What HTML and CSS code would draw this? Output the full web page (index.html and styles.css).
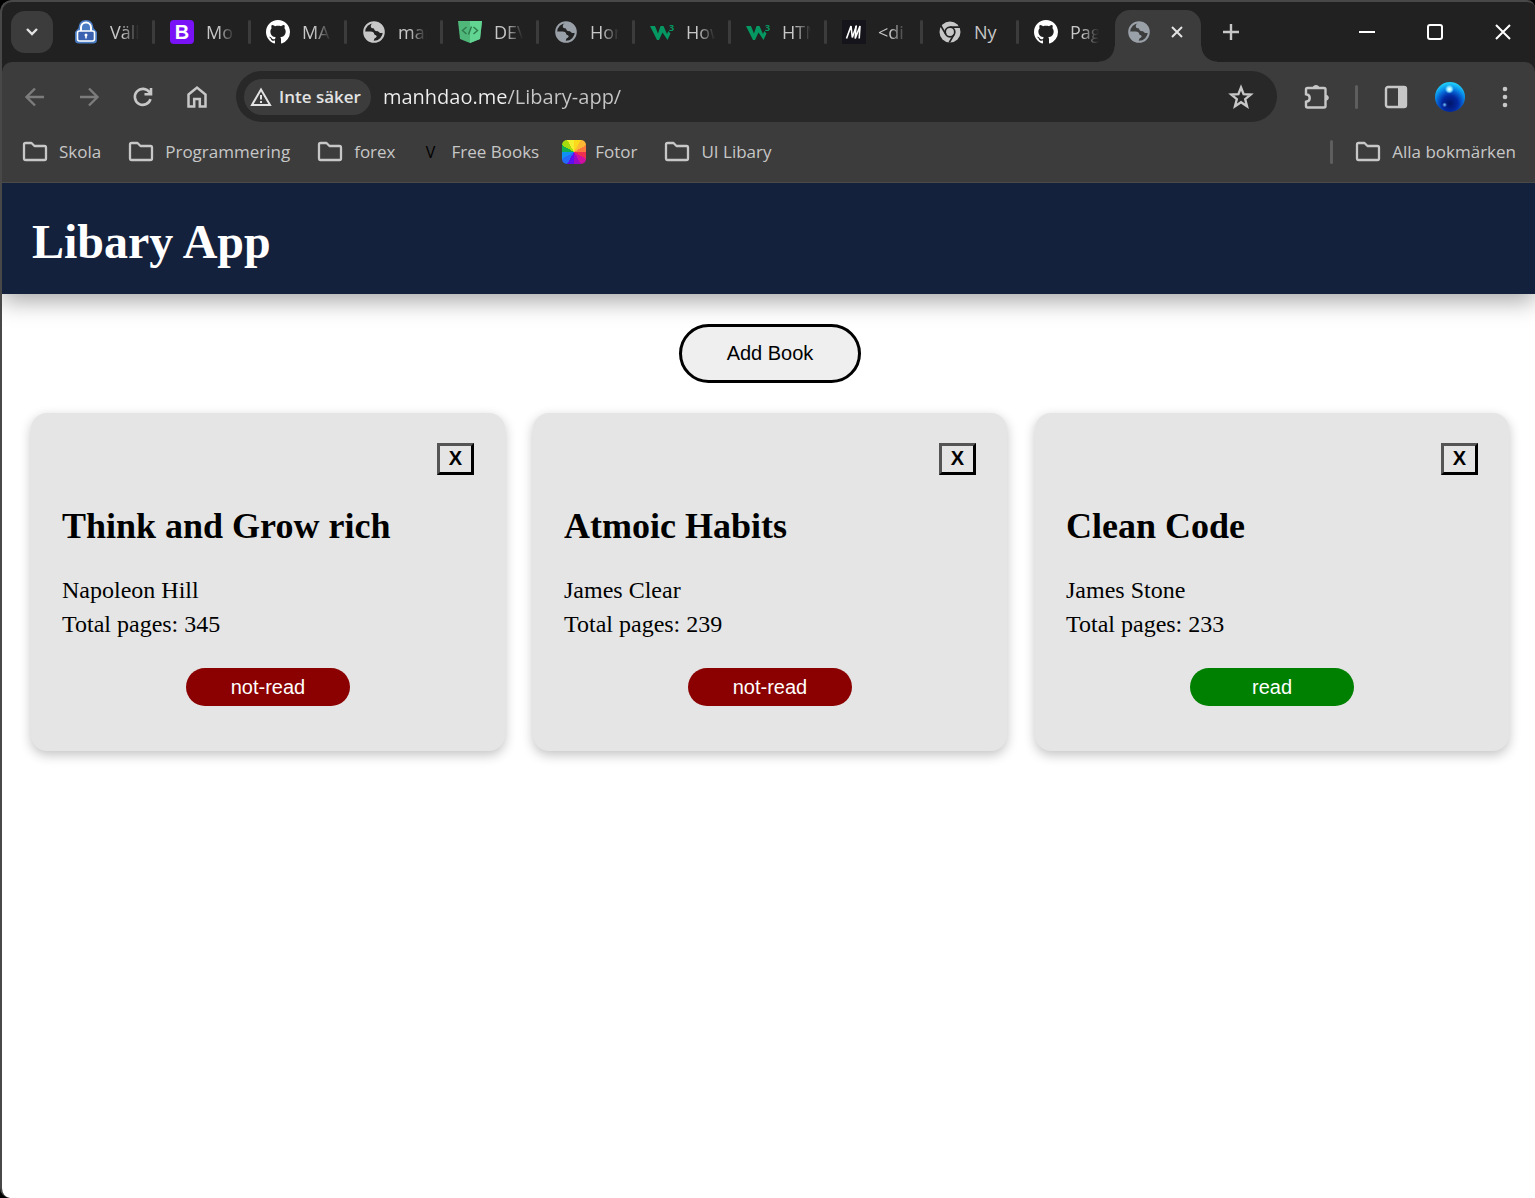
FILE: index.html
```html
<!DOCTYPE html>
<html lang="sv">
<head>
<meta charset="utf-8">
<meta name="viewport" content="width=device-width, initial-scale=1">
<title>Libary App</title>
<link rel="stylesheet" href="styles.css">
</head>
<body>
<svg class="sprite" aria-hidden="true">
  <symbol id="globe" viewBox="0 0 24 24">
    <circle cx="12" cy="12" r="9.8" fill="none" stroke="currentColor" stroke-width="2"/>
    <path fill="currentColor" d="M12.5 2C9.500 3.300 8.600 5 8.800 6.800C9 8 10.300 8.200 11.200 8.300C12.300 8.500 12.100 10 13.200 10.700C14.300 11.400 15.700 10.700 16.600 11.800C17.500 13 19 13.500 21.800 12.500C22.300 7 18 2 12.500 2Z"/>
    <path fill="currentColor" d="M2 11.500H8.500C11 11.500 12 12.700 12.200 14C12.300 15.200 14.500 14.800 14.700 16.200C14.800 17.600 12.800 17.800 12.300 18.800C11.800 20 11.800 21 11.500 22C6 22 1.800 17.500 2 11.500Z"/>
  </symbol>
  <symbol id="github" viewBox="0 0 16 16">
    <path fill="#fff" d="M8 0C3.580 0 0 3.580 0 8c0 3.540 2.290 6.530 5.470 7.590.4.070.55-.17.55-.38 0-.19-.01-.82-.01-1.490-2.010.37-2.530-.49-2.690-.94-.09-.23-.48-.94-.82-1.130-.28-.15-.68-.52-.01-.53.63-.01 1.080.58 1.230.82.72 1.210 1.870.87 2.330.66.070-.52.28-.87.51-1.070-1.780-.2-3.640-.89-3.640-3.950 0-.87.31-1.590.82-2.150-.08-.2-.36-1.020.08-2.120 0 0 .67-.21 2.200.82.64-.18 1.320-.27 2-.27s1.360.09 2 .27c1.530-1.040 2.200-.82 2.200-.82.44 1.100.16 1.920.08 2.120.51.56.82 1.270.82 2.150 0 3.070-1.870 3.750-3.650 3.950.29.25.54.73.54 1.480 0 1.070-.01 1.930-.01 2.200 0 .21.15.46.55.38A8.010 8.010 0 0 0 16 8c0-4.420-3.580-8-8-8z"/>
  </symbol>
  <symbol id="w3" viewBox="0 0 24 24">
    <path fill="#059862" d="M0 6H5L8 13.500L10.500 6H13.500L17 14L18.300 11L20.500 13.500L17.500 20L12.500 12.500L9 20H7Z"/>
    <text x="19" y="11" font-family="Open Sans, sans-serif" font-size="9" font-weight="700" fill="#059862">3</text>
  </symbol>
  <symbol id="folder" viewBox="0 0 26 22">
    <path fill="none" stroke="currentColor" stroke-width="2.300" stroke-linejoin="round" d="M3.500 2H9.500L12.500 5H22.500Q24 5 24 6.500V17.500Q24 19 22.500 19H3.500Q2 19 2 17.500V3.500Q2 2 3.500 2Z"/>
  </symbol>
</svg>

<div class="window">
  <header class="tabstrip">
    <button class="tab-search" aria-label="Sök flikar"><svg width="14" height="10" viewBox="0 0 14 10"><path d="M2 2L7 7L12 2" fill="none" stroke="#e3e3e3" stroke-width="2.400"/></svg></button>
    <nav class="tabs">
      <a class="tab" href="#"><svg class="fav" viewBox="0 0 24 24"><path d="M12 0C7 0 5 3 4.500 8L1 12V20Q1 23.500 5 23.500H19Q23 23.500 23 20V12L19.500 8C19 3 17 0 12 0Z" fill="#4a7cc4"/><path d="M7 11V7.500A5 5 0 0 1 17 7.500V11" fill="none" stroke="#fff" stroke-width="2"/><rect x="3.500" y="11" width="17" height="10" rx="2" fill="#3a62b0" stroke="#fff" stroke-width="1.600"/><circle cx="12" cy="15" r="1.500" fill="#fff"/><path d="M12 15V18.500" stroke="#fff" stroke-width="1.500"/></svg><span class="label">Väll</span></a>
      <a class="tab" href="#"><span class="fav boot">B</span><span class="label">Mo</span></a>
      <a class="tab" href="#"><svg class="fav"><use href="#github"/></svg><span class="label">MA</span></a>
      <a class="tab" href="#"><svg class="fav"><use href="#globe"/></svg><span class="label">mar</span></a>
      <a class="tab" href="#"><svg class="fav" viewBox="0 0 24 24"><path d="M0 1H24L22 19L12 23L2 19Z" fill="#4fb779"/><path d="M12 1H24L22 19L12 23Z" fill="#63d592"/><path d="M8.500 7L4.500 10.500L8.500 14M15.500 7L19.500 10.500L15.500 14M13.500 6.500L10.500 14.500" fill="none" stroke="#2f7d4e" stroke-width="1.500"/></svg><span class="label">DEV</span></a>
      <a class="tab" href="#"><svg class="fav blue"><use href="#globe"/></svg><span class="label">Hor</span></a>
      <a class="tab" href="#"><svg class="fav"><use href="#w3"/></svg><span class="label">How</span></a>
      <a class="tab" href="#"><svg class="fav"><use href="#w3"/></svg><span class="label">HTM</span></a>
      <a class="tab" href="#"><svg class="fav" viewBox="0 0 24 24"><path fill="#15141a" d="M0 0H24V24H0Z"/><path d="M4.500 18.500L9 6L10.300 17.500L14.300 6L14.800 6" fill="none" stroke="#fff" stroke-width="1.600"/><path d="M14 6L13.200 18.500L18 6L17.200 18.500" fill="none" stroke="#fff" stroke-width="1.600"/></svg><span class="label">&lt;di</span></a>
      <a class="tab" href="#"><svg class="fav" viewBox="0 0 24 24"><circle cx="12" cy="12" r="10.500" fill="#c7c7c7"/><circle cx="12" cy="12" r="4.800" fill="none" stroke="#202120" stroke-width="1.700"/><path d="M12 7.200H22M7.900 14.400L3 6M16.100 14.400L11.300 22.500" stroke="#202120" stroke-width="1.700"/></svg><span class="label full">Ny</span></a>
      <a class="tab" href="#"><svg class="fav"><use href="#github"/></svg><span class="label">Pag</span></a>
    </nav>
    <div class="tab-active">
      <svg class="fav blue"><use href="#globe"/></svg>
      <button class="plain" aria-label="Stäng flik"><svg width="12" height="12" viewBox="0 0 12 12"><path d="M1 1L11 11M11 1L1 11" stroke="#e3e3e3" stroke-width="2"/></svg></button>
    </div>
    <button class="plain new-tab" aria-label="Ny flik"><svg width="16" height="16" viewBox="0 0 16 16"><path d="M8 0V16M0 8H16" stroke="#c7c7c7" stroke-width="2.400"/></svg></button>
    <div class="controls">
      <button class="plain" aria-label="Minimera"><svg width="16" height="16" viewBox="0 0 16 16"><path d="M0 8H16" stroke="#fff" stroke-width="2"/></svg></button>
      <button class="plain" aria-label="Maximera"><svg width="16" height="16" viewBox="0 0 16 16"><rect x="1" y="1" width="14" height="14" rx="2" fill="none" stroke="#fff" stroke-width="2"/></svg></button>
      <button class="plain" aria-label="Stäng"><svg width="16" height="16" viewBox="0 0 16 16"><path d="M1 1L15 15M15 1L1 15" stroke="#fff" stroke-width="2"/></svg></button>
    </div>
  </header>

  <div class="chrome">
    <div class="toolbar">
      <button class="plain dim" aria-label="Bakåt"><svg width="24" height="24" viewBox="0 0 24 24"><path d="M21 12H4M12 3.500L3.500 12L12 20.500" fill="none" stroke="currentColor" stroke-width="2.400"/></svg></button>
      <button class="plain dim" aria-label="Framåt"><svg width="24" height="24" viewBox="0 0 24 24"><path d="M3 12H20M12 3.500L20.500 12L12 20.500" fill="none" stroke="currentColor" stroke-width="2.400"/></svg></button>
      <button class="plain" aria-label="Läs in igen"><svg width="24" height="24" viewBox="0 0 24 24"><path d="M19.500 14.200A8 8 0 1 1 18.500 7.400L20 9.200M20 3V9.300H13.500" fill="none" stroke="currentColor" stroke-width="2.600"/></svg></button>
      <button class="plain" aria-label="Startsida"><svg width="24" height="24" viewBox="0 0 24 24"><path d="M3.500 9.500L12 2.500L20.500 9.500V21.500H14.800V14H9.200V21.500H3.500Z" fill="none" stroke="currentColor" stroke-width="2.500"/></svg></button>
      <div class="omnibox">
        <button class="chip"><svg width="22" height="20" viewBox="0 0 22 20"><path d="M11 2.500L20 18H2Z" fill="none" stroke="#e3e3e3" stroke-width="2"/><path d="M11 8V12.500M11 14V16" stroke="#e3e3e3" stroke-width="2"/></svg>Inte säker</button>
        <input class="url" type="text" aria-label="Adress" value="manhdao.me/Libary-app/">
        <button class="plain" aria-label="Bokmärk"><svg width="26" height="26" viewBox="0 0 26 26"><path d="M13 3.500L15.600 10.200L22.700 10.600L17.200 15.200L19 22.200L13 18.300L7 22.200L8.800 15.200L3.300 10.600L10.400 10.200Z" fill="none" stroke="#c7c7c7" stroke-width="2.400"/></svg></button>
      </div>
      <button class="plain ext" aria-label="Tillägg"><svg width="28" height="28" viewBox="0 0 28 28"><path d="M4.500 5H21Q22.500 5 22.500 6.500V23Q22.500 24.500 21 24.500H4.500Q3 24.500 3 23V18.800C8 18.300 8 11.700 3 11.200V6.500Q3 5 4.500 5Z" fill="none" stroke="currentColor" stroke-width="2.400"/><path d="M9.500 5C10 1 16 1 16.500 5ZM22.500 11.500C27 12 27 17.500 22.500 18Z" fill="currentColor"/></svg></button>
      <span class="rule"></span>
      <button class="plain" aria-label="Sidopanel"><svg width="24" height="24" viewBox="0 0 24 24"><rect x="2" y="2" width="20" height="20" rx="2" fill="none" stroke="currentColor" stroke-width="2.400"/><path d="M14 2H22V22H14Z" fill="currentColor"/></svg></button>
      <button class="avatar" aria-label="Profil"></button>
      <button class="plain" aria-label="Meny"><svg width="8" height="24" viewBox="0 0 8 24"><g fill="currentColor"><circle cx="4" cy="4" r="2.300"/><circle cx="4" cy="12" r="2.300"/><circle cx="4" cy="20" r="2.300"/></g></svg></button>
    </div>
    <nav class="bookmarks">
      <a href="#"><svg class="folder"><use href="#folder"/></svg>Skola</a>
      <a href="#"><svg class="folder"><use href="#folder"/></svg>Programmering</a>
      <a href="#"><svg class="folder"><use href="#folder"/></svg>forex</a>
      <a href="#" class="books"><span class="vee">V</span>Free Books</a>
      <a href="#" class="site"><span class="fotor"></span>Fotor</a>
      <a href="#"><svg class="folder"><use href="#folder"/></svg>UI Libary</a>
      <span class="rule"></span>
      <a href="#"><svg class="folder"><use href="#folder"/></svg>Alla bokmärken</a>
    </nav>
  </div>

  <div class="page">
    <div class="banner"><h1>Libary App</h1></div>
    <main>
      <button class="add">Add Book</button>
      <section class="cards">
        <article class="card">
          <button class="remove">X</button>
          <h2>Think and Grow rich</h2>
          <p>Napoleon Hill</p>
          <p>Total pages: 345</p>
          <button class="status">not-read</button>
        </article>
        <article class="card">
          <button class="remove">X</button>
          <h2>Atmoic Habits</h2>
          <p>James Clear</p>
          <p>Total pages: 239</p>
          <button class="status">not-read</button>
        </article>
        <article class="card">
          <button class="remove">X</button>
          <h2>Clean Code</h2>
          <p>James Stone</p>
          <p>Total pages: 233</p>
          <button class="status read">read</button>
        </article>
      </section>
    </main>
  </div>
</div>
</body>
</html>
```
FILE: styles.css
```css
* { box-sizing: border-box; }
body { margin: 0; background: #000; font-family: "Liberation Serif", serif; color: #000; }
button { font-family: "Liberation Sans", sans-serif; }
svg { display: block; flex: none; }
a { color: inherit; text-decoration: none; }
.sprite { position: absolute; width: 0; height: 0; }

.window {
  min-height: 100vh;
  display: flex;
  flex-direction: column;
  border: solid #484848;
  border-width: 2px 0 0 2px;
  border-radius: 12px 8px 0 10px;
  background: #202120;
  overflow: hidden;
}
.plain { display: flex; padding: 0; border: 0; background: none; color: #c7c7c7; }
.dim { color: #7c7c7c; }

/* Tab strip */
.tabstrip {
  display: flex;
  align-items: center;
  height: 60px;
  padding-left: 9px;
  font: 18px/26px "Open Sans", sans-serif;
  color: #c7c7c7;
}
.tab-search {
  display: grid;
  place-items: center;
  width: 42px;
  height: 42px;
  padding: 0;
  border: 0;
  border-radius: 14px;
  background: #3c3c3c;
}
.tabs { display: flex; padding-left: 9px; min-width: 0; }
.tab { display: flex; align-items: center; gap: 12px; width: 96px; padding-left: 12px; }
.tab + .tab { position: relative; }
.tab + .tab::before {
  content: "";
  position: absolute;
  left: -6px;
  width: 3px;
  height: 24px;
  border-radius: 2px;
  background: #3c3c3c;
}
.tab:last-child { width: 93px; }
.fav { width: 24px; height: 24px; flex: none; }
.blue { color: #9aa0a8; }
.label {
  width: 30px;
  overflow: hidden;
  white-space: nowrap;
  -webkit-mask-image: linear-gradient(to right, #000 12px, transparent 29px);
  mask-image: linear-gradient(to right, #000 12px, transparent 29px);
}
.full { -webkit-mask-image: none; mask-image: none; }
.boot {
  border-radius: 4px;
  background: #7a12f8;
  color: #fff;
  font: bold 20px/24px "Liberation Sans", sans-serif;
  text-align: center;
}
.tab-active {
  position: relative;
  align-self: flex-end;
  display: flex;
  align-items: center;
  gap: 20px;
  width: 86px;
  height: 52px;
  padding: 0 0 8px 12px;
  border-radius: 15px 15px 0 0;
  background: #3c3c3c;
}
.tab-active::before, .tab-active::after {
  content: "";
  position: absolute;
  bottom: 0;
  width: 16px;
  height: 16px;
}
.tab-active::before { right: 100%; background: radial-gradient(circle at 0 0, transparent 15px, #3c3c3c 16px); }
.tab-active::after { left: 100%; background: radial-gradient(circle at 100% 0, transparent 15px, #3c3c3c 16px); }
.new-tab { margin-left: 22px; }
.controls { display: flex; gap: 52px; margin-left: auto; padding-right: 24px; }

/* Toolbar and bookmarks */
.chrome {
  position: relative;
  z-index: 1;
  border-bottom: 1px solid #4a4a4a;
  border-radius: 10px 10px 0 0;
  background: #3c3c3c;
  color: #c7c7c7;
}
.toolbar { display: flex; align-items: center; gap: 30px; padding: 9px 26px 0 21px; }
.omnibox {
  flex: 1;
  display: flex;
  align-items: center;
  gap: 12px;
  height: 51px;
  margin-left: -3px;
  padding: 0 23px 0 8px;
  border-radius: 26px;
  background: #282828;
}
.chip {
  display: flex;
  align-items: center;
  gap: 7px;
  height: 36px;
  padding: 0 10px 0 6px;
  border: 0;
  border-radius: 18px;
  background: #3c3c3c;
  color: #e3e3e3;
  font: 600 17px/24px "Open Sans", sans-serif;
  white-space: nowrap;
}
.url {
  flex: 1;
  min-width: 0;
  padding: 0;
  border: 0;
  background: linear-gradient(to right, #f0f0f0 124px, #c7c7c7 124px);
  -webkit-background-clip: text;
  background-clip: text;
  color: transparent;
  font: 20px/30px "Open Sans", sans-serif;
}
.ext { margin-left: -4px; }
.rule { width: 3px; height: 24px; border-radius: 2px; background: #5e5e5e; }
.ext + .rule { margin-left: -6px; margin-right: -4px; }
.avatar {
  width: 30px;
  height: 30px;
  margin: 0 6px 0 -3px;
  padding: 0;
  border: 0;
  border-radius: 50%;
  background:
    radial-gradient(circle at 48% 24%, #fff 0, #8fe8ff 8%, transparent 16%),
    radial-gradient(circle at 32% 76%, #7cc4ff 0, transparent 8%),
    radial-gradient(circle at 50% 72%, #001468 0, #0228a0 30%, #0660d0 48%, #0a90ea 60%, #20ccf8 78%);
}
.bookmarks {
  display: flex;
  align-items: center;
  gap: 27px;
  height: 60px;
  padding: 0 19px 0 20px;
  font: 17px/24px "Open Sans", sans-serif;
  white-space: nowrap;
}
.bookmarks a { display: flex; align-items: center; gap: 11px; }
.bookmarks .rule { margin-left: auto; margin-right: -5px; }
.folder { width: 26px; height: 22px; }
.bookmarks .books { gap: 13px; }
.vee { width: 16px; color: #000; font-size: 16px; text-align: center; }
.bookmarks .site { gap: 9px; margin-left: -4px; }
.fotor {
  width: 24px;
  height: 24px;
  border-radius: 5px;
  background: conic-gradient(#fcd91c 0 30deg, #fdb833 30deg 60deg, #fb7a3c 60deg 90deg, #f0304f 90deg 120deg, #d010a0 120deg 150deg, #9a08c8 150deg 180deg, #5a10f0 180deg 210deg, #2468f8 210deg 240deg, #1090f0 240deg 270deg, #12b050 270deg 300deg, #a4dc10 300deg 330deg, #f4ee30 330deg);
}

/* Library page */
.page { flex: 1; background: #fff; }
.banner {
  padding: 31px 30px 25px;
  background: #14213d;
  color: #fff;
  box-shadow: 0 7px 22px rgba(0, 0, 0, 0.35);
}
h1 { margin: 0; font-size: 48px; line-height: 55px; }
main { padding: 30px 26px 30px 29px; }
.add {
  display: block;
  width: 182px;
  height: 59px;
  margin: 0 auto 30px;
  border: 3px solid #000;
  border-radius: 30px;
  background: #efefef;
  color: #000;
  font-size: 20px;
}
.cards { display: grid; grid-template-columns: repeat(auto-fit, minmax(400px, 1fr)); gap: 28px; }
.card {
  display: flex;
  flex-direction: column;
  padding: 30px 31px 45px;
  border-radius: 16px;
  background: #e5e5e5;
  box-shadow: 0 4px 12px rgba(0, 0, 0, 0.24);
}
.remove {
  align-self: flex-end;
  width: 37px;
  height: 32px;
  padding: 0 0 2px;
  border: 3px solid;
  border-color: #555 #000 #000 #555;
  background: none;
  color: #000;
  font-size: 20px;
  line-height: 24px;
  font-weight: 700;
}
h2 { margin: 31px 0 26px; font-size: 36px; line-height: 41px; }
p { margin: 0; font-size: 24px; line-height: 34px; }
.status {
  align-self: center;
  width: 164px;
  height: 38px;
  margin-top: 27px;
  border: 0;
  border-radius: 19px;
  background: #8b0000;
  color: #fff;
  font-size: 20px;
}
.read { background: #008000; }
```
